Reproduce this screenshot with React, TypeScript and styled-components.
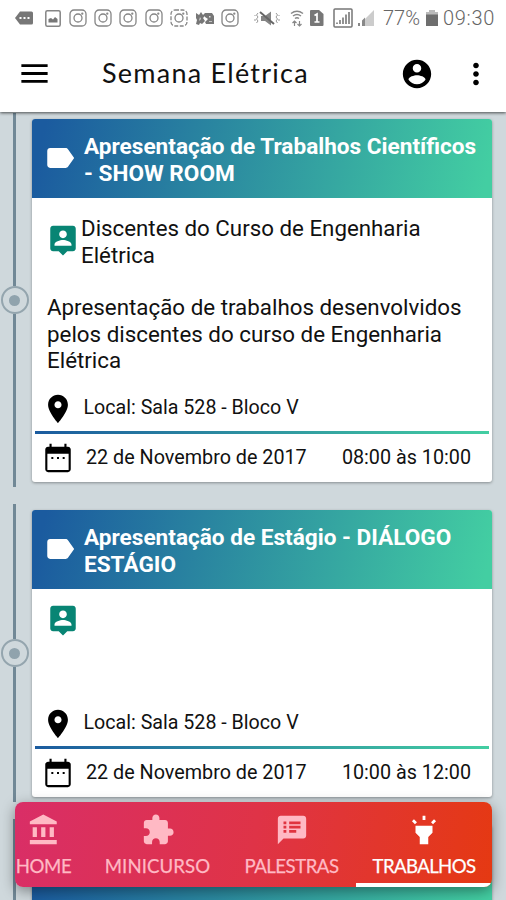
import React from "react";
import styled, { createGlobalStyle } from "styled-components";

const Global = createGlobalStyle`
  * { box-sizing: border-box; }
  html, body { margin: 0; padding: 0; }
  body { width: 506px; height: 900px; overflow: hidden; font-family: Roboto, sans-serif; color: #111; }
  svg { flex: none; display: block; }
`;

const Screen = styled.div`
  position: relative;
  display: flex;
  flex-direction: column;
  width: 506px;
  height: 900px;
  overflow: hidden;
  background: #cfd8dc;
`;

const TopArea = styled.div`
  position: relative;
  z-index: 2;
  flex: none;
  background: #fff;
  box-shadow: 0 1px 3px rgba(0, 0, 0, 0.65);
`;

const StatusBar = styled.div`
  display: flex;
  align-items: center;
  height: 36px;
  padding-left: 14px;
  color: #858585;
`;

const Slot = styled.span<{ $w: number }>`
  flex: none;
  display: flex;
  align-items: center;
  justify-content: center;
  width: ${(p) => p.$w}px;
`;

const StatusText = styled.span<{ $w: number; $ls: number }>`
  flex: none;
  width: ${(p) => p.$w}px;
  font-size: 20px;
  line-height: 36px;
  letter-spacing: ${(p) => p.$ls}px;
  font-weight: 300;
  white-space: nowrap;
  color: #666;
`;

const AppBar = styled.header`
  display: flex;
  align-items: center;
  height: 76px;
  padding: 0 13px 0 21px;
`;

const AppTitle = styled.h1`
  flex: 1;
  margin: -2px 0 0 54px;
  font-family: Lato, sans-serif;
  font-size: 27px;
  font-weight: 400;
  letter-spacing: 1.25px;
  line-height: 76px;
  white-space: nowrap;
`;

const BarAction = styled.button`
  display: flex;
  align-items: center;
  justify-content: center;
  width: 34px;
  height: 34px;
  margin: -1px 0 0 25px;
  padding: 0;
  border: 0;
  background: none;
  color: #000;
`;

const MenuButton = styled(BarAction)`
  width: 27px;
  margin: -2px 0 0;
`;

const Feed = styled.main`
  display: flex;
  flex-direction: column;
  gap: 17px;
  padding-top: 1px;
`;

const Entry = styled.article<{ $h: number }>`
  flex: none;
  display: grid;
  grid-template-columns: 32px 460px;
  height: ${(p) => p.$h}px;
`;

const Rail = styled.div`
  display: flex;
  flex-direction: column;
  align-items: center;
  width: 29px;
`;

const RailLine = styled.div`
  flex: 1;
  width: 3px;
  background: #718896;
`;

const RailDot = styled.div`
  display: flex;
  align-items: center;
  justify-content: center;
  width: 28px;
  height: 28px;
  border: 2px solid #94a5ae;
  border-radius: 50%;

  &::after {
    content: "";
    width: 11px;
    height: 11px;
    border-radius: 50%;
    background: #90a3ad;
  }
`;

const Card = styled.section`
  display: flex;
  flex-direction: column;
  margin: 6px 0 5px;
  overflow: hidden;
  border-radius: 3px;
  background: #fff;
  box-shadow: 0 1px 3px rgba(0, 0, 0, 0.35);
`;

const CardHead = styled.header`
  flex: none;
  display: flex;
  align-items: center;
  height: 79px;
  padding-left: 11px;
  background: linear-gradient(103deg, #1b5b9f 3%, #43cea2 98%);
  color: #fff;

  svg { margin-top: -2px; }
`;

const CardTitle = styled.h2`
  margin: 2px 0 0 7px;
  font-size: 22.6px;
  font-weight: 700;
  line-height: 27px;
  white-space: pre;
`;

const CardBody = styled.div`
  flex: 1;
  display: flex;
  flex-direction: column;
  min-height: 0;
`;

const Speaker = styled.div<{ $named: boolean }>`
  display: flex;
  align-items: center;
  padding: ${(p) => (p.$named ? 17 : 14)}px 0 0 14px;
  color: #088574;

  svg { margin-top: ${(p) => (p.$named ? -3 : 0)}px; }
`;

const SpeakerName = styled.p`
  margin: 0 0 0 1px;
  font-size: 22.3px;
  line-height: 26.5px;
  white-space: pre;
  color: #111;
`;

const Summary = styled.p`
  margin: 26px 0 0 15px;
  font-size: 22.35px;
  line-height: 26.7px;
  white-space: pre;
`;

const Place = styled.div`
  display: flex;
  align-items: center;
  height: 46px;
  margin-top: auto;
  padding: 1px 0 0 9px;
  font-size: 19.65px;
  svg { color: #000; }
`;

const PlaceText = styled.span`
  margin: -3px 0 0 8.5px;
`;

const Divider = styled.div`
  flex: none;
  height: 3px;
  margin: 0 3px;
  background: linear-gradient(90deg, #1b5b9f, #43cea2);
`;

const When = styled.footer`
  flex: none;
  display: flex;
  align-items: center;
  height: 48px;
  padding: 0 21px 1px 9px;
  font-size: 19.75px;
  svg { color: #000; }
`;

const DateText = styled.time`
  flex: 1;
  margin-left: 11px;
`;

const TabBar = styled.nav`
  position: absolute;
  z-index: 3;
  left: 15px;
  top: 802px;
  display: flex;
  width: 477px;
  height: 85px;
  overflow: hidden;
  border-radius: 8px;
  background: linear-gradient(100deg, #d92e67 0%, #df3347 50%, #e53912 100%);
  box-shadow: 0 4px 14px rgba(0, 0, 0, 0.4);
`;

const Tab = styled.a<{ $w: number; $active?: boolean }>`
  flex: none;
  display: flex;
  flex-direction: column;
  align-items: center;
  width: ${(p) => p.$w}px;
  padding-top: 11px;
  border-bottom: 4px solid ${(p) => (p.$active ? "#fff" : "transparent")};
  color: ${(p) => (p.$active ? "#fff" : "#ffb9c4")};

  &:first-child { margin-left: -16px; }
`;

const TabLabel = styled.span<{ $ls: number }>`
  margin-top: 6px;
  font-family: Lato, sans-serif;
  font-size: 18.6px;
  line-height: 26px;
  letter-spacing: ${(p) => p.$ls}px;
  white-space: nowrap;
  -webkit-text-stroke: 0.25px currentColor;
`;

const paths = {
  menu: "M3 18.400h18v-2H3v2zm0-5.400h18v-2H3v2zm0-7.400v2h18v-2H3z",
  account:
    "M12 2C6.48 2 2 6.48 2 12s4.48 10 10 10 10-4.48 10-10S17.52 2 12 2zm0 3c1.66 0 3 1.34 3 3s-1.34 3-3 3-3-1.34-3-3 1.34-3 3-3zm0 14.2c-2.5 0-4.71-1.28-6-3.22.03-1.99 4-3.08 6-3.08 1.99 0 5.97 1.09 6 3.08-1.29 1.94-3.5 3.22-6 3.22z",
  more: "M12 8c1.1 0 2-.9 2-2s-.9-2-2-2-2 .9-2 2 .9 2 2 2zm0 2c-1.1 0-2 .9-2 2s.9 2 2 2 2-.9 2-2-.9-2-2-2zm0 6c-1.1 0-2 .9-2 2s.9 2 2 2 2-.9 2-2-.9-2-2-2z",
  label:
    "M17.63 5.84C17.27 5.33 16.67 5 16 5L5 5.01C3.9 5.01 3 5.9 3 7v10c0 1.1.9 1.99 2 1.99L16 19c.67 0 1.27-.33 1.63-.84L22 12l-4.37-6.16z",
  person:
    "M19 2H5c-1.11 0-2 .9-2 2v14c0 1.1.89 2 2 2h4l3 3 3-3h4c1.1 0 2-.9 2-2V4c0-1.1-.9-2-2-2zm-7 3.3c1.49 0 2.7 1.21 2.7 2.7 0 1.49-1.21 2.7-2.7 2.7-1.49 0-2.7-1.21-2.7-2.7 0-1.49 1.21-2.7 2.7-2.7zM18 16H6v-.9c0-2 4-3.1 6-3.1s6 1.1 6 3.1v.9z",
  pin: "M12 2C8.13 2 5 5.13 5 9c0 5.25 7 13 7 13s7-7.75 7-13c0-3.87-3.13-7-7-7zm0 9.5c-1.38 0-2.5-1.12-2.5-2.5s1.12-2.5 2.5-2.5 2.5 1.12 2.5 2.5-1.12 2.5-2.5 2.5z",
  date: "M8.700 11.300H7.300v1.400h1.400v-1.400zm4 0h-1.400v1.400h1.400v-1.400zm4 0h-1.400v1.400h1.400v-1.400zm2.300-7.300h-1V2h-1.500v2H7.500V2H6v2H5c-1.11 0-1.99.9-1.99 2L3 20c0 1.1.89 2 2 2h14c1.1 0 2-.9 2-2V6c0-1.1-.9-2-2-2zm.500 16.500H4.500V9h15v11.500z",
  bank: "M4 10v7h3v-7H4zm6 0v7h3v-7h-3zM2 22h19v-3H2v3zm14-12v7h3v-7h-3zm-4.5-9L2 6v2h19V6l-9.5-5z",
  puzzle:
    "M20.5 11H19V7c0-1.1-.9-2-2-2h-4V3.5C13 2.12 11.88 1 10.5 1S8 2.12 8 3.5V5H4c-1.1 0-1.99.9-1.99 2v3.8H3.5c1.49 0 2.7 1.21 2.7 2.7s-1.21 2.7-2.7 2.7H2V20c0 1.1.9 2 2 2h3.8v-1.5c0-1.49 1.21-2.7 2.7-2.7 1.49 0 2.7 1.21 2.7 2.7V22H17c1.1 0 2-.9 2-2v-4h1.5c1.38 0 2.5-1.12 2.5-2.5S21.88 11 20.5 11z",
  notes:
    "M20 2H4c-1.1 0-1.99.9-1.99 2L2 22l4-4h14c1.1 0 2-.9 2-2V4c0-1.1-.9-2-2-2zM8 14H6v-2h2v2zm0-3H6V9h2v2zm0-3H6V6h2v2zm7 6h-5v-2h5v2zm3-3h-8V9h8v2zm0-3h-8V6h8v2z",
  torch:
    "M6 14l3 3v5h6v-5l3-3V9H6zm5-12h2v3h-2zM3.5 5.875L4.914 4.46l2.12 2.122L5.62 7.997zm13.46.71l2.123-2.12 1.414 1.414L18.375 8z",
};

const Icon = ({ name, size = 34 }: { name: keyof typeof paths; size?: number }) => (
  <svg width={size} height={size} viewBox="0 0 24 24" fill="currentColor">
    <path d={paths[name]} />
  </svg>
);

const Insta = ({ dashed }: { dashed?: boolean }) => (
  <svg width="18" height="18" viewBox="0 0 18 18" fill="none" stroke="currentColor" strokeWidth="1.3">
    <rect x="1" y="1" width="16" height="16" rx="4" strokeDasharray={dashed ? "4 1.5" : undefined} />
    <circle cx="9" cy="9" r="4" />
    <circle cx="13.3" cy="4.7" r="0.5" />
  </svg>
);

const Status = () => (
  <StatusBar>
    <Slot $w={20}>
      <svg width="18" height="14" viewBox="0 0 18 14">
        <path d="M0 7l5-6.5h11.5a1.5 1.5 0 0 1 1.5 1.5v10a1.5 1.5 0 0 1-1.5 1.5H5z" fill="#777" />
        <path d="M4.500 6h2v2h-2zm4 0h2v2h-2zm4 0h2v2h-2z" fill="#fff" />
      </svg>
    </Slot>
    <Slot $w={37}>
      <svg width="16" height="17" viewBox="0 0 16 17">
        <rect x=".8" y=".8" width="14.4" height="15.4" rx="1.5" fill="none" stroke="currentColor" strokeWidth="1.5" />
        <path d="M3.500 12.500V9l2.500-1 2 1.500 2-2.500 2.500 2v3.500z" fill="#777" />
      </svg>
    </Slot>
    <Slot $w={13.5}><Insta /></Slot>
    <Slot $w={37}><Insta /></Slot>
    <Slot $w={13.5}><Insta /></Slot>
    <Slot $w={37}><Insta /></Slot>
    <Slot $w={14}><Insta dashed /></Slot>
    <Slot $w={37}>
      <svg width="18" height="13" viewBox="0 0 18 13" fill="#777">
        <path d="M0 1l3 2 2-3 2 3 2-2v3l-2 2 2 3-3 3-2-1-1 2-3-1 1-4-1-2zM9 1h7l2 3v8h-8l-1-2 3-3-3-2z" />
        <path d="M4 5l1 2-2 2zM13 4h1.500v1.500H13zM13 9h3v.8h-3z" fill="#ddd" />
      </svg>
    </Slot>
    <Slot $w={14}><Insta /></Slot>
    <Slot $w={59}>
      <svg width="26" height="15" viewBox="0 0 26 15">
        <path d="M7 5h4l6-4.500v14L11 10H7z" fill="#858585" />
        <path d="M6 1l14 12" stroke="#666" strokeWidth="2" />
        <path d="M4 2L2.500 4 4 6 2.500 8 4 10l-1.500 2M1 4v1m0 3v2M22 2l1.500 2L22 6l1.500 2-1.500 2 1.500 2m1.500-8v1m0 3v2" stroke="#999" fill="none" />
      </svg>
    </Slot>
    <Slot $w={2}>
      <svg width="14" height="17" viewBox="0 0 14 17" fill="none" stroke="#888" strokeWidth="1.500">
        <path d="M1 3.500Q7-1 13 3.500M3 6q4-3 8 0M5 8.500q2-1.500 4 0" />
        <path d="M4.500 16v-5M2.500 13l2-2 2 2M9.500 11v5M7.500 14l2 2 2-2" strokeWidth="1.2" />
      </svg>
    </Slot>
    <Slot $w={38}>
      <svg width="14" height="16" viewBox="0 0 14 16">
        <path d="M1 0h8l4.500 4v11a1 1 0 0 1-1 1H1a1 1 0 0 1-1-1V1a1 1 0 0 1 1-1z" fill="#777" />
        <path d="M4.500 5.500l2.500-1.500v8M4.500 12h5" fill="none" stroke="#fff" strokeWidth="1.700" />
      </svg>
    </Slot>
    <Slot $w={13}>
      <svg width="20" height="20" viewBox="0 0 20 20">
        <rect x="1" y="1" width="18" height="18" rx="1" fill="none" stroke="#777" strokeWidth="1.500" />
        <path d="M4 16v-1.500M7 16v-4M10 16V9.500M13 16V6.500M16 16V4" stroke="#777" strokeWidth="1.600" />
      </svg>
    </Slot>
    <Slot $w={34}>
      <svg width="16" height="16" viewBox="0 0 16 16">
        <path d="M16 0v16H6.500V9.500z" fill="#ccc" />
        <path d="M0 16v-3h2v3zM4 16v-5.500l3-3V16z" fill="#888" />
      </svg>
    </Slot>
    <StatusText $w={37} $ls={0}>77%</StatusText>
    <Slot $w={23}>
      <svg width="12" height="16" viewBox="0 0 12 16">
        <path d="M3.500 0h5v2H12v14H0V2h3.500z" fill="#6e6e6e" />
        <path d="M0 2h3.500V0h5v2H12v2.500H0z" fill="#bbb" />
      </svg>
    </Slot>
    <StatusText $w={60} $ls={0.7}>09:30</StatusText>
  </StatusBar>
);

interface Talk {
  height: number;
  title?: string;
  speaker?: string;
  summary?: string;
  time?: string;
}

const talks: Talk[] = [
  {
    height: 374,
    title: "Apresentação de Trabalhos Científicos\n- SHOW ROOM",
    speaker: "Discentes do Curso de Engenharia\nElétrica",
    summary:
      "Apresentação de trabalhos desenvolvidos\npelos discentes do curso de Engenharia\nElétrica",
    time: "08:00 às 10:00",
  },
  { height: 298, title: "Apresentação de Estágio - DIÁLOGO\nESTÁGIO", time: "10:00 às 12:00" },
  { height: 298 },
];

const TalkEntry = ({ talk }: { talk: Talk }) => (
  <Entry $h={talk.height}>
    <Rail>
      <RailLine />
      <RailDot />
      <RailLine />
    </Rail>
    <Card>
      <CardHead>
        <Icon name="label" />
        {talk.title && <CardTitle>{talk.title}</CardTitle>}
      </CardHead>
      {talk.time && (
        <CardBody>
          <Speaker $named={!!talk.speaker}>
            <Icon name="person" />
            {talk.speaker && <SpeakerName>{talk.speaker}</SpeakerName>}
          </Speaker>
          {talk.summary && <Summary>{talk.summary}</Summary>}
          <Place>
            <Icon name="pin" />
            <PlaceText>Local: Sala 528 - Bloco V</PlaceText>
          </Place>
          <Divider />
          <When>
            <Icon name="date" />
            <DateText>22 de Novembro de 2017</DateText>
            <span>{talk.time}</span>
          </When>
        </CardBody>
      )}
    </Card>
  </Entry>
);

export default function App() {
  return (
    <>
      <Global />
      <Screen>
        <TopArea>
          <Status />
          <AppBar>
            <MenuButton aria-label="Menu"><Icon name="menu" size={35} /></MenuButton>
            <AppTitle>Semana Elétrica</AppTitle>
            <BarAction aria-label="Conta"><Icon name="account" /></BarAction>
            <BarAction aria-label="Mais"><Icon name="more" /></BarAction>
          </AppBar>
        </TopArea>
        <Feed>
          {talks.map((talk, i) => (
            <TalkEntry key={i} talk={talk} />
          ))}
        </Feed>
        <TabBar>
          <Tab $w={89}><Icon name="bank" /><TabLabel $ls={-0.4}>HOME</TabLabel></Tab>
          <Tab $w={139}><Icon name="puzzle" /><TabLabel $ls={0.1}>MINICURSO</TabLabel></Tab>
          <Tab $w={129}><Icon name="notes" /><TabLabel $ls={-0.5}>PALESTRAS</TabLabel></Tab>
          <Tab $w={136} $active><Icon name="torch" /><TabLabel $ls={-0.6}>TRABALHOS</TabLabel></Tab>
        </TabBar>
      </Screen>
    </>
  );
}
